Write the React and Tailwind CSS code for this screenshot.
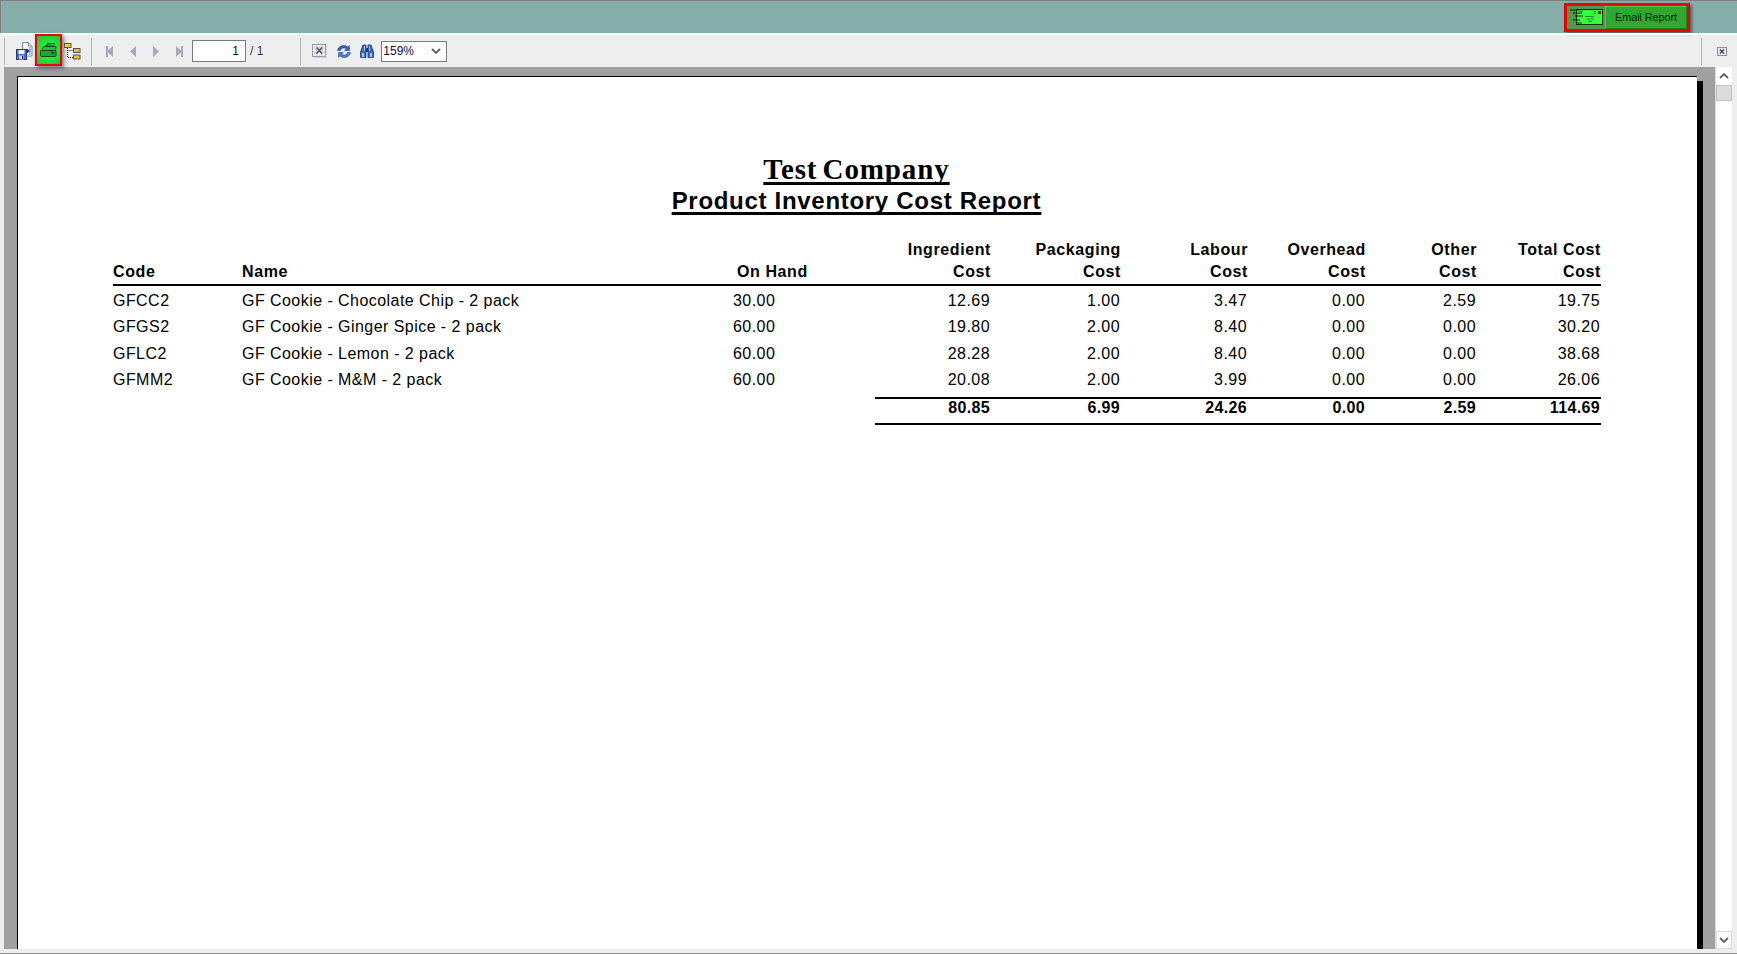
import React from 'react';

const rows = [
  ['GFCC2', 'GF Cookie - Chocolate Chip - 2 pack', '30.00', '12.69', '1.00', '3.47', '0.00', '2.59', '19.75'],
  ['GFGS2', 'GF Cookie - Ginger Spice - 2 pack', '60.00', '19.80', '2.00', '8.40', '0.00', '0.00', '30.20'],
  ['GFLC2', 'GF Cookie - Lemon - 2 pack', '60.00', '28.28', '2.00', '8.40', '0.00', '0.00', '38.68'],
  ['GFMM2', 'GF Cookie - M&M - 2 pack', '60.00', '20.08', '2.00', '3.99', '0.00', '0.00', '26.06'],
];
const totals = ['80.85', '6.99', '24.26', '0.00', '2.59', '114.69'];

const columns = 'grid grid-cols-[129px_490px_143px_116px_130px_127px_118px_111px_124px]';

const SaveIcon = () => (
  <svg width="17" height="18" viewBox="0 0 17 18">
    <path d="M6.500 .5h6l3.500 3.500v10h-9.500z" fill="#fff" stroke="#8a8a8a" />
    <path d="M12.500 .5v3.500h3.500" fill="#dfe8f4" stroke="#8a8a8a" />
    <rect x="13" y="5" width="2.500" height="8" fill="#9cc4ee" />
    <path d="M11 6.500l3 2.500-3 2.500z" fill="#123f90" />
    <rect x=".5" y="7.500" width="10" height="10" fill="#4a6cc4" stroke="#26397a" />
    <rect x="2.500" y="8" width="6" height="4" fill="#f4f4f8" />
    <rect x="3" y="13.500" width="5" height="4" fill="#cfcfdf" />
    <rect x="6" y="14" width="1.500" height="3" fill="#26397a" />
  </svg>
);

const PrintIcon = () => (
  <svg width="17" height="14" viewBox="0 0 17 14">
    <path d="M5.500 3.500l2-3h7l-2 3z" fill="#2ce044" stroke="#0c4a18" />
    <path d="M.5 8.500l3-5h12.500l-.5 5z" fill="#22c238" stroke="#0c4a18" />
    <rect x=".5" y="7.500" width="15.500" height="6" rx="1" fill="#1ba830" stroke="#0c4a18" />
    <rect x="11" y="9" width="3" height="1.500" fill="#06300e" />
    <path d="M6 2h6M5 3h6" stroke="#0c4a18" strokeWidth=".7" />
  </svg>
);

const TreeIcon = () => (
  <svg width="17" height="17" viewBox="0 0 17 17">
    <rect x=".5" y=".5" width="6.500" height="4" fill="#f8c050" stroke="#555" />
    <rect x="9.500" y="5.500" width="6.500" height="4" fill="#f8b840" stroke="#555" />
    <rect x="9.500" y="12" width="6.500" height="4" fill="#f8b840" stroke="#555" />
    <path d="M3.500 5v9.500h6M3.500 7.500h6" fill="none" stroke="#222" strokeDasharray="1 1" />
  </svg>
);

const NavIcon = ({ dir, bar }) => (
  <svg width="8" height="11" viewBox="0 0 8 11">
    {dir === 'left' ? <path d="M7 0v11L1 5.500z" fill="#a6a6bc" /> : <path d="M1 0v11l6-5.500z" fill="#a6a6bc" />}
    {bar && <rect x={dir === 'left' ? 0 : 6} y="0" width="2" height="11" fill="#a6a6bc" />}
  </svg>
);

const ExportCloseIcon = () => (
  <svg width="15" height="14" viewBox="0 0 15 14">
    <rect x=".5" y=".5" width="13" height="12" fill="#ececec" stroke="#9a9ab0" />
    <path d="M14 2v12H2" fill="none" stroke="#b8b8cc" />
    <path d="M1 4h12M1 8h12M5 1v11M10 1v11" stroke="#cacaca" />
    <path d="M4.500 3.500l5.500 6M10 3.500l-5.500 6" stroke="#555" strokeWidth="1.500" />
  </svg>
);

const SmallCloseIcon = () => (
  <svg width="10" height="9" viewBox="0 0 10 9">
    <rect x=".5" y=".5" width="9" height="8" fill="#e4e4ea" stroke="#8f8fa8" />
    <path d="M3 2.500l4 4M7 2.500l-4 4" stroke="#444" strokeWidth="1.200" />
  </svg>
);

const RefreshIcon = () => (
  <svg width="16" height="15" viewBox="0 0 16 15">
    <path d="M1.500 6.500C2 2.500 7.500-.5 12 3l1.500-1.500v5h-5L10.500 5C8 3 5 4 4.500 6.500z" fill="#2c62bc" stroke="#1c3f8c" strokeWidth=".5" />
    <path d="M14.500 8.500C14 12.500 8.500 15.500 4 12l-1.500 1.500v-5h5L5.500 10c2.500 2 5.500 1 6-1.500z" fill="#3f7ed8" stroke="#1c3f8c" strokeWidth=".5" />
  </svg>
);

const BinocularsIcon = () => (
  <svg width="14" height="15" viewBox="0 0 14 15">
    <path d="M3 1h3v12.500H.5V8z" fill="#3a66b4" stroke="#1f3a80" strokeWidth=".8" />
    <path d="M8 1h3l2.500 7v5.500H8z" fill="#3a66b4" stroke="#1f3a80" strokeWidth=".8" />
    <rect x="6" y="4" width="2" height="4" fill="#1f3a80" />
    <rect x="2" y="9" width="2" height="4" fill="#a8c8f0" />
    <rect x="10" y="9" width="2" height="4" fill="#a8c8f0" />
    <rect x="4" y="2" width="1" height="5" fill="#a8c8f0" />
    <rect x="9" y="2" width="1" height="5" fill="#a8c8f0" />
  </svg>
);

const MailIcon = () => (
  <svg width="33" height="17" viewBox="0 0 33 17">
    <rect x="6.500" y=".5" width="26" height="15" fill="#38ff38" stroke="#0b2a0b" />
    <path d="M0 1h9M3 4h9M5 7h8M3 11h7M6 14h6" stroke="#0b2a0b" strokeWidth="1.200" />
    <path d="M9 2h4" stroke="#0b7a20" strokeWidth="1" />
    <rect x="28" y="2" width="3" height="3" fill="#8a1a2a" />
    <path d="M24 2.500h1.500M24 4.500h1.500" stroke="#0b2a0b" />
    <path d="M15 7.500h9M17 10h7M18 12.500h4" stroke="#169a2a" />
  </svg>
);

const Chevron = ({ up }) => (
  <svg width="10" height="6" viewBox="0 0 10 6">
    <path d={up ? 'M1 5l4-4 4 4' : 'M1 1l4 4 4-4'} fill="none" stroke="#606060" strokeWidth="1.800" />
  </svg>
);

const Separator = () => <div className="w-px h-[27px] bg-[#b4b4b4]" />;

const Cell = ({ children, bold }) => (
  <div className={`text-right pr-px ${bold ? 'font-bold' : ''}`}>{children}</div>
);

const HeadCell = ({ top, bottom }) => (
  <div className="text-right font-bold leading-[22px] self-end tracking-[0.6px]">
    {top && <div>{top}</div>}
    <div>{bottom}</div>
  </div>
);

export default function App() {
  return (
    <div className="h-screen w-full overflow-hidden flex flex-col bg-[#eeeeee] border-b border-b-[#8c8c8c]" style={{ fontFamily: '"Liberation Sans", Arial, sans-serif' }}>
      {/* title strip */}
      <div className="h-[33px] shrink-0 bg-[#86aeab] border-t border-l border-[#7d7d7d] flex justify-end items-start pt-[2px] pr-[47px]">
        <div className="flex w-[126px] h-[29px] border-[3px] border-[#f00000] shadow-[2px_2px_3px_rgba(0,0,0,0.45)]">
          <div className="w-[38px] bg-[#4c9a4c] flex items-center justify-center">
            <MailIcon />
          </div>
          <div className="flex-1 bg-[#30a830] border border-[#4ccc4c] border-b-[#1f801f] border-r-[#1f801f] flex items-center justify-center text-[11px] tracking-[-0.15px] text-[#08200a]">
            Email Report
          </div>
        </div>
      </div>
      <div className="h-[2px] shrink-0 bg-white" />

      {/* toolbar */}
      <div className="h-[32px] shrink-0 flex items-center pl-[4px] relative">
        <Separator />
        <div className="ml-[11px]"><SaveIcon /></div>
        <div className="ml-[2px] w-[27px] h-[32px] -mt-[2px] flex items-center justify-center border-[2px] border-[#f00000] bg-[radial-gradient(circle,#2cf040_30%,#22c038_100%)] shadow-[2px_2px_4px_rgba(0,0,0,0.5)]">
          <PrintIcon />
        </div>
        <div className="ml-[2px]"><TreeIcon /></div>
        <div className="ml-[10px]"><Separator /></div>
        <div className="ml-[14px] flex items-center gap-[15px]">
          <NavIcon dir="left" bar />
          <NavIcon dir="left" />
          <NavIcon dir="right" />
          <NavIcon dir="right" bar />
        </div>
        <div className="ml-[9px] w-[54px] h-[22px] bg-white border border-[#7a7a7a] text-right pr-[6px] text-[12px] leading-[20px] text-[#200a40]">1</div>
        <span className="ml-[4px] text-[12px] text-[#333366]">/ 1</span>
        <div className="ml-[37px]"><Separator /></div>
        <div className="ml-[11px]"><ExportCloseIcon /></div>
        <div className="ml-[9px]"><RefreshIcon /></div>
        <div className="ml-[8px]"><BinocularsIcon /></div>
        <div className="ml-[7px] w-[66px] h-[21px] bg-white border border-[#7a7a7a] flex items-center justify-between pl-[1px] pr-[5px] text-[12px] text-[#101030]">
          <span>159%</span>
          <Chevron />
        </div>
        <div className="flex-1" />
        <Separator />
        <div className="ml-[15px] mr-[10px]"><SmallCloseIcon /></div>
      </div>

      {/* report viewer */}
      <div className="flex-1 min-h-0 flex pl-[4px] pr-[5px] mb-[4px]">
        <div className="flex-1 min-w-0 bg-[#a0a0a0] flex pl-[13px] pr-[12px] pt-[9px]">
          <div className="flex-1 min-w-0 bg-white border-l border-t border-black text-black">
            <div className="pt-[77px] pl-[95px] w-[1584px]">
              <div className="text-center font-bold pr-[2px]">
                <div className="underline decoration-[3px] underline-offset-[3px] [text-decoration-skip-ink:none] text-[29px] leading-[30px] tracking-[0.9px] [word-spacing:-3px]" style={{ fontFamily: '"Liberation Serif", "Times New Roman", serif' }}>
                  Test Company
                </div>
                <div className="underline decoration-[3px] underline-offset-[3px] [text-decoration-skip-ink:none] text-[24px] leading-[33px] tracking-[0.7px]">
                  Product Inventory Cost Report
                </div>
              </div>
              <div className="w-[1488px] text-[16px] tracking-[0.45px] mt-[22px]">
                <div className={`${columns} border-b-2 border-black pb-[1px]`}>
                  <div className="font-bold self-end leading-[22px] tracking-[0.6px]">Code</div>
                  <div className="font-bold self-end leading-[22px] tracking-[0.6px]">Name</div>
                  <div className="font-bold self-end leading-[22px] pl-[5px] tracking-[0.6px]">On Hand</div>
                  <HeadCell top="Ingredient" bottom="Cost" />
                  <HeadCell top="Packaging" bottom="Cost" />
                  <HeadCell top="Labour" bottom="Cost" />
                  <HeadCell top="Overhead" bottom="Cost" />
                  <HeadCell top="Other" bottom="Cost" />
                  <HeadCell top="Total Cost" bottom="Cost" />
                </div>
                <div className="pt-[2px]">
                  {rows.map((r) => (
                    <div key={r[0]} className={`${columns} h-[26.300px] items-center`}>
                      <div>{r[0]}</div>
                      <div>{r[1]}</div>
                      <div className="pl-px">{r[2]}</div>
                      {r.slice(3).map((v, i) => <Cell key={i}>{v}</Cell>)}
                    </div>
                  ))}
                </div>
                <div className="ml-[762px] mt-[4px] border-y-2 border-black h-[28px] pb-[6px] grid grid-cols-[116px_130px_127px_118px_111px_124px] items-center leading-[18px] tracking-[0.35px]">
                  {totals.map((v, i) => <Cell key={i} bold>{v}</Cell>)}
                </div>
              </div>
            </div>
          </div>
          <div className="w-[6px] bg-black mt-[5px]" />
        </div>

        {/* scrollbar */}
        <div className="w-[17px] shrink-0 bg-white border-l border-[#dcdcdc] flex flex-col">
          <div className="h-[18px] flex items-center justify-center"><Chevron up /></div>
          <div className="h-[16px] bg-[#dcdcdc] border border-[#c4c4c4]" />
          <div className="flex-1" />
          <div className="h-[18px] flex items-center justify-center border border-[#dcdcdc]"><Chevron /></div>
        </div>
      </div>
    </div>
  );
}
